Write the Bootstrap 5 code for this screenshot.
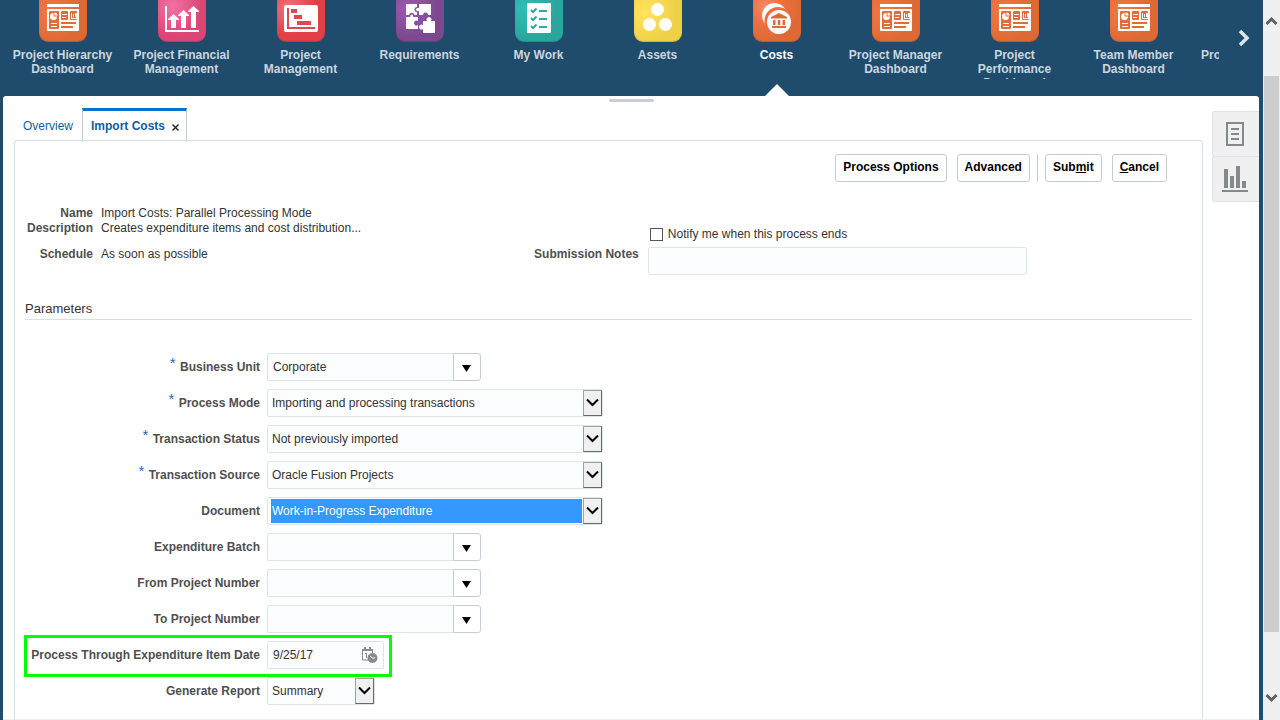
<!DOCTYPE html>
<html lang="en">
<head>
<meta charset="utf-8">
<meta name="viewport" content="width=device-width, initial-scale=1">
<title>Import Costs</title>
<link rel="stylesheet" href="https://cdn.jsdelivr.net/npm/bootstrap@5.3.0/dist/css/bootstrap.min.css">
<style>
:root{--navy:#1f4b6d;--line:#d6dfe6;--line-btn:#c4ced7;--field:#fcfdfe;--blue:#145c9e}
body{font-family:"Liberation Sans",Arial,sans-serif;font-size:12px;line-height:15px;color:#333;background:var(--navy)}
button,input,select,textarea{font-family:inherit}
/* springboard */
.springboard{height:96px;padding-left:3px}
.tiles{overflow:hidden;min-width:0}
.tile{flex:0 0 119px;color:#ccd6de;font-weight:bold;line-height:14px;text-decoration:none;text-align:center;position:relative}
.tile:hover,.tile.current{color:#fff}
.tile svg{display:block;margin:0 auto 6px;width:48px;height:42px;border-radius:0 0 9px 9px;box-shadow:inset 0 -1px 1px rgba(0,0,0,.15)}
.tile-label{display:block;padding:0 8px;max-height:31px;overflow:hidden}
.tile.current::after{content:"";position:absolute;bottom:0;left:50%;margin-left:-12px;border:12px solid transparent;border-top:0;border-bottom-color:#fff}
.c-orange{background:radial-gradient(circle at 25% 30%,#f57842,#dd6935 65%)}
.c-pink{background:radial-gradient(circle at 30% 15%,#f272a2,#da4676 60%)}
.c-red{background:radial-gradient(circle at 25% 20%,#f27278,#e23f48 55%)}
.c-purple{background:radial-gradient(circle at 25% 20%,#9c5ab0,#7d4890 60%)}
.c-teal{background:radial-gradient(circle at 20% 20%,#31bdb5,#2aa69e 60%)}
.c-yellow{background:radial-gradient(circle at 25% 30%,#ffe45c,#efd147 65%)}
.c-cost{background:radial-gradient(circle at 25% 15%,#f28a66,#f0713f 30%,#dd6935 70%)}
.next-btn{flex:0 0 44px;border:0;background:none;padding:0 0 21px 6px}
/* work area */
.work{background:#fff;margin:0 4px 0 3px;border-radius:3px 3px 0 0;border-bottom:1px solid #eee;min-width:0}
.grip{height:3px;width:45px;border-radius:2px;background:#c9cddb;margin:3px auto 6px;display:block}
.main-col{margin-left:11px;min-width:0}
.nav-tabs{border:0;margin-bottom:-1px}
.nav-tabs .nav-link{height:34px;padding:7px 9px 0;border:0;border-radius:0;color:var(--blue);line-height:16px;border-top:3px solid transparent}
.nav-tabs .nav-link.active{color:var(--blue);font-weight:bold;background:#fff;border:1px solid #bcc8d2;border-width:3px 1px 0;border-top-color:#0572ce;padding:7px 6px 0 8px}
.close-tab{border:0;background:none;padding:5px 0 0 2px;line-height:0}
.sheet{border:1px solid var(--line);border-bottom:0;border-radius:4px 4px 0 0;padding:13px 10px 13px}
.tool-row{padding-right:25px}
.btn-tool{height:28px;border:1px solid var(--line-btn);border-radius:3px;background:#fff;color:#000;font-size:12px;font-weight:bold;line-height:16px;padding:4px 7px 6px}
.btn-tool + .btn-tool{margin-left:10px}
.tool-sep{width:1px;height:28px;background:var(--line-btn);margin:0 7px}
.side-col{flex:0 0 47px;margin-left:9px;padding-top:3px}
.side-btn{height:46px;border:1px solid #dfe3e7;border-right:0;background:#f0f0f0;border-radius:3px 0 0 3px;padding:0 2px 0 0}
.side-btn + .side-btn{margin-top:-1px}
/* process summary */
.summary{display:grid;grid-template-columns:43% 57%;align-items:start;padding-top:24px}
.k{font-weight:bold;color:#4f4f4f;text-align:right}
.summary dl{display:grid;grid-template-columns:68px 1fr;column-gap:8px;margin:0}
.summary dd{margin:0}
.gap-top{padding-top:11px}
.notes-grid{display:grid;grid-template-columns:112px minmax(0,379px);column-gap:9px;row-gap:5px;padding-top:21px}
.form-check-input.notify{width:13px;height:13px;margin:0 5px 0 2px;border:1px solid #555;border-radius:0;float:none}
.fld,textarea.fld{border:1px solid #dfe4e7;border-radius:2px;background-color:var(--field);font-size:12px;line-height:16px;color:#333;height:28px;min-height:28px;padding:5px}
textarea.fld{resize:none;overflow:hidden}
.section-title{font-size:13px;line-height:16px;margin:26px 0 33px;padding-bottom:2px;border-bottom:1px solid var(--line);font-weight:normal}
/* parameters */
.param{display:flex;gap:7px;width:fit-content;max-width:100%;margin-bottom:8px;position:relative}
.param > label{flex:0 0 235px;text-align:right;font-weight:bold;color:#4f4f4f;line-height:28px}
.req{color:#2a67b0;font-weight:normal;font-size:15px;line-height:14px;vertical-align:3px;margin-right:1px}
.lov{width:214px}
.lov .fld{border-radius:2px 0 0 2px;border-right:0}
.lov-btn{flex:0 0 28px;border:1px solid var(--line-btn);border-radius:0 3px 3px 0;background:#fff;padding:2px 1px 0 0}
.sel{width:336px;position:relative}
.sel .fld{padding-left:4px;background-image:none}
.sel-arrow{position:absolute;right:1px;top:1px;width:19px;height:26px;background:#f0f0f0;border:1px solid #a0a0a0;border-right-color:#696969;border-bottom-color:#696969;pointer-events:none}
.sel-short{width:108px}
.sel-focus .fld{background:linear-gradient(#39f,#39f) 3px 1px/calc(100% - 23px) 24px no-repeat #fff;color:#fff}
.date-box{width:117px;position:relative}
.date-btn{position:absolute;right:6px;top:5px;border:0;background:none;padding:0;line-height:0}
.marked::after{content:"";position:absolute;inset:-6px -8px -8px -1px;border:3px solid #0f0;pointer-events:none}
/* page scroller */
.scroller{flex:0 0 17px;background:#f0f0f0;display:grid;grid-template-rows:76fr 556fr 88fr;padding:0 1px}
.thumb{background:#cdcdcd}
</style>
</head>
<body>
<svg width="0" height="0" class="position-absolute" aria-hidden="true">
  <symbol id="dash" viewBox="0 0 48 42">
    <path fill="#fff" d="M8 4h32v3H8zM8 9h32v21a1 1 0 0 1-1 1H9a1 1 0 0 1-1-1z"/>
    <g fill="#e36c38"><rect x="10" y="11" width="10" height="18" rx="1"/><rect x="22" y="11" width="7" height="9" rx="1"/><rect x="31" y="11" width="7" height="9" rx="1"/><path d="M22 22h15v2H22zM22 26h12v2H22z"/></g>
    <path fill="#fff" d="M14.500 13v3.500H18A3.500 3.500 0 1 1 14.500 13zM15.500 12.500A3 3 0 0 1 18.500 15.500h-3zM12 23h6v1h-6zM12 26h6v1h-6zM23 14h5v1h-5zM23 17h4v1h-4zM32 13h1v5h4v-5h1v6h-6zM34 14h1v3h-1zM36 13h1v4h-1z"/>
  </symbol>
  <symbol id="chev" viewBox="0 0 17 24"><path d="M3 8.500L8.500 14L14 8.500" fill="none" stroke="#000" stroke-width="2"/></symbol>
  <symbol id="tri" viewBox="0 0 9 7"><path d="M0 0h9L4.500 7z"/></symbol>
</svg>

<div class="d-flex min-vh-100">
  <div class="d-flex flex-column flex-grow-1" style="min-width:0">
    <header class="springboard d-flex">
      <nav class="tiles d-flex flex-grow-1" aria-label="Springboard">
        <a class="tile" href="#"><svg class="c-orange"><use href="#dash"/></svg><span class="tile-label">Project Hierarchy Dashboard</span></a>
        <a class="tile" href="#"><svg class="c-pink" viewBox="0 0 48 42" fill="#fff"><path d="M7 6h2v24h32v2H7zM15.500 14l5.500 5v1h-3v8h-5v-8h-3v-1zM25.500 10l5.500 5v1h-3v12h-5V16h-3v-1zM35.500 6l5.500 5v1h-3v16h-5V12h-3v-1z"/></svg><span class="tile-label">Project Financial Management</span></a>
        <a class="tile" href="#"><svg class="c-red" viewBox="0 0 48 42"><rect x="7" y="5" width="34" height="27" rx="2" fill="#fff"/><path fill="#e2474f" d="M10 8h2v19h26v2H10zM14 9h6v4h-6zM17 15h8v4h-8zM20 21h14v4H20z"/></svg><span class="tile-label">Project Management</span></a>
        <a class="tile" href="#"><svg class="c-purple" viewBox="0 0 48 42" fill="#fff"><path d="M10 4h11v3a2.500 2.500 0 1 0 0 5v3h-2.500a2.800 2.800 0 0 0-5.500 0h-3zM23 4h12v11h-3a2.500 2.500 0 1 0-5 0h-4v-4h-1.500a1.500 1.500 0 0 1 0-3H23zM10 17h4.500a1.500 1.500 0 1 1 2.500 0h5v4a2.500 2.500 0 1 0 0 4v4H10zM27 21h4a2.500 2.500 0 1 1 4 0h4v12H27v-4a2.500 2.500 0 1 1 0-4z"/></svg><span class="tile-label">Requirements</span></a>
        <a class="tile" href="#"><svg class="c-teal" viewBox="0 0 48 42"><rect x="12" y="3" width="24" height="30" rx="1" fill="#fff"/><path d="M16 10l2 2 3.500-3.500M16 18l2 2 3.500-3.500M16 26l2 2 3.500-3.500M24 11h8M24 19h8M24 27h8" fill="none" stroke="#2aaaa2" stroke-width="2"/></svg><span class="tile-label">My Work</span></a>
        <a class="tile" href="#"><svg class="c-yellow" viewBox="0 0 48 42" fill="#fff"><circle cx="23.500" cy="9.500" r="6.500"/><circle cx="15.500" cy="24.500" r="6.500"/><circle cx="31.500" cy="24.500" r="6.500"/></svg><span class="tile-label">Assets</span></a>
        <a class="tile current" href="#" aria-current="page"><svg class="c-cost" viewBox="0 0 48 42"><circle cx="21.500" cy="15.500" r="12.500" fill="#fff"/><circle cx="25" cy="20.500" r="13.500" fill="#ea6f3d"/><circle cx="26" cy="22" r="12" fill="#fff"/><path fill="#e06a36" d="M26 13l8 4v1.500H18V17zM20 20h2.500v5H20zM24.800 20h2.500v5h-2.500zM29.500 20H32v5h-2.500zM19 26h14v2H19z"/></svg><span class="tile-label">Costs</span></a>
        <a class="tile" href="#"><svg class="c-orange"><use href="#dash"/></svg><span class="tile-label">Project Manager Dashboard</span></a>
        <a class="tile" href="#"><svg class="c-orange"><use href="#dash"/></svg><span class="tile-label">Project Performance Dashboard</span></a>
        <a class="tile" href="#"><svg class="c-orange"><use href="#dash"/></svg><span class="tile-label">Team Member Dashboard</span></a>
        <a class="tile text-start pt-5" href="#"><span class="tile-label">Projects</span></a>
      </nav>
      <button class="next-btn" type="button" aria-label="Next"><svg width="12" height="18" viewBox="0 0 12 18"><path d="M2 2l7 7-7 7" fill="none" stroke="#dce3e9" stroke-width="3.500"/></svg></button>
    </header>

    <main class="work flex-grow-1 d-flex flex-column">
      <span class="grip"></span>
      <div class="d-flex flex-grow-1">
        <div class="main-col flex-grow-1 d-flex flex-column">
          <ul class="nav nav-tabs">
            <li class="nav-item"><a class="nav-link" href="#">Overview</a></li>
            <li class="nav-item d-flex"><div class="nav-link active d-flex gap-1"><a href="#" class="text-decoration-none text-reset">Import Costs</a><button class="close-tab align-self-start" type="button" aria-label="Close tab"><svg width="9" height="9" viewBox="0 0 9 9"><path d="M1.500 1.500l6 6M7.500 1.500l-6 6" stroke="#222" stroke-width="1.400"/></svg></button></div></li>
          </ul>
          <form class="sheet flex-grow-1">
            <div class="tool-row d-flex justify-content-end">
              <button type="button" class="btn btn-tool">Process Options</button>
              <button type="button" class="btn btn-tool">Advanced</button>
              <span class="tool-sep"></span>
              <button type="button" class="btn btn-tool">Sub<u>m</u>it</button>
              <button type="button" class="btn btn-tool"><u>C</u>ancel</button>
            </div>

            <div class="summary">
              <dl>
                <dt class="k">Name</dt><dd>Import Costs: Parallel Processing Mode</dd>
                <dt class="k">Description</dt><dd>Creates expenditure items and cost distribution...</dd>
                <dt class="k gap-top">Schedule</dt><dd class="gap-top">As soon as possible</dd>
              </dl>
              <div class="notes-grid">
                <span></span>
                <div class="d-flex align-items-center"><input class="form-check-input notify" type="checkbox" id="notify"><label for="notify">Notify me when this process ends</label></div>
                <label class="k" for="notes">Submission Notes</label>
                <textarea class="form-control fld" id="notes" rows="1"></textarea>
              </div>
            </div>

            <h2 class="section-title">Parameters</h2>

            <div class="param"><label for="bu"><span class="req">*</span> Business Unit</label><div class="lov d-flex"><input class="form-control fld" id="bu" value="Corporate"><button class="lov-btn" type="button" aria-label="Search business unit"><svg width="9" height="7"><use href="#tri"/></svg></button></div></div>
            <div class="param"><label for="pm"><span class="req">*</span> Process Mode</label><div class="sel"><select class="form-select fld" id="pm"><option>Importing and processing transactions</option></select><svg class="sel-arrow"><use href="#chev"/></svg></div></div>
            <div class="param"><label for="ts"><span class="req">*</span> Transaction Status</label><div class="sel"><select class="form-select fld" id="ts"><option>Not previously imported</option></select><svg class="sel-arrow"><use href="#chev"/></svg></div></div>
            <div class="param"><label for="src"><span class="req">*</span> Transaction Source</label><div class="sel"><select class="form-select fld" id="src"><option>Oracle Fusion Projects</option></select><svg class="sel-arrow"><use href="#chev"/></svg></div></div>
            <div class="param"><label for="doc">Document</label><div class="sel sel-focus"><select class="form-select fld" id="doc"><option>Work-in-Progress Expenditure</option></select><svg class="sel-arrow"><use href="#chev"/></svg></div></div>
            <div class="param"><label for="eb">Expenditure Batch</label><div class="lov d-flex"><input class="form-control fld" id="eb"><button class="lov-btn" type="button" aria-label="Search batch"><svg width="9" height="7"><use href="#tri"/></svg></button></div></div>
            <div class="param"><label for="fp">From Project Number</label><div class="lov d-flex"><input class="form-control fld" id="fp"><button class="lov-btn" type="button" aria-label="Search from project"><svg width="9" height="7"><use href="#tri"/></svg></button></div></div>
            <div class="param"><label for="tp">To Project Number</label><div class="lov d-flex"><input class="form-control fld" id="tp"><button class="lov-btn" type="button" aria-label="Search to project"><svg width="9" height="7"><use href="#tri"/></svg></button></div></div>
            <div class="param marked"><label for="dt">Process Through Expenditure Item Date</label><div class="date-box"><input class="form-control fld" id="dt" value="9/25/17"><button class="date-btn" type="button" aria-label="Select date"><svg width="18" height="18" viewBox="0 0 18 18"><path d="M9 14H2.500V4h10v4" fill="none" stroke="#868b8f"/><path fill="#868b8f" d="M2 3h11v2H2zM4 1h2v3H4zM9 1h2v3H9zM5 7h2v5H6V8H5z"/><circle cx="12.500" cy="12" r="5" fill="#868b8f"/><path d="M10 10l2.500 2H15" fill="none" stroke="#fff"/></svg></button></div></div>
            <div class="param mb-0"><label for="gr">Generate Report</label><div class="sel sel-short"><select class="form-select fld" id="gr"><option>Summary</option></select><svg class="sel-arrow"><use href="#chev"/></svg></div></div>
          </form>
        </div>
        <aside class="side-col d-flex flex-column">
          <button class="side-btn" type="button" aria-label="Worklist"><svg width="18" height="24" viewBox="0 0 18 24" fill="none" stroke="#85898d" stroke-width="2"><path d="M1 1h16v22H1zM5 7h8M5 12h8M5 17h8"/></svg></button>
          <button class="side-btn" type="button" aria-label="Reports"><svg width="26" height="26" viewBox="0 0 26 26" fill="#85898d"><path d="M2 3h4v19H2zM8 10h4v12H8zM14 0h4v22h-4zM20 15h4v7h-4zM0 24h26v2H0z"/></svg></button>
        </aside>
      </div>
    </main>
  </div>
  <div class="scroller" aria-hidden="true">
    <svg class="mt-3" width="15" height="11" viewBox="0 0 15 11"><path d="M2.500 8L7.500 3l5 5" fill="none" stroke="#606060" stroke-width="3"/></svg>
    <div class="thumb"></div>
    <svg class="align-self-end mb-3" width="15" height="11" viewBox="0 0 15 11"><path d="M2.500 2l5 5 5-5" fill="none" stroke="#606060" stroke-width="3"/></svg>
  </div>
</div>
<script src="https://cdn.jsdelivr.net/npm/bootstrap@5.3.0/dist/js/bootstrap.bundle.min.js"></script>
</body>
</html>
